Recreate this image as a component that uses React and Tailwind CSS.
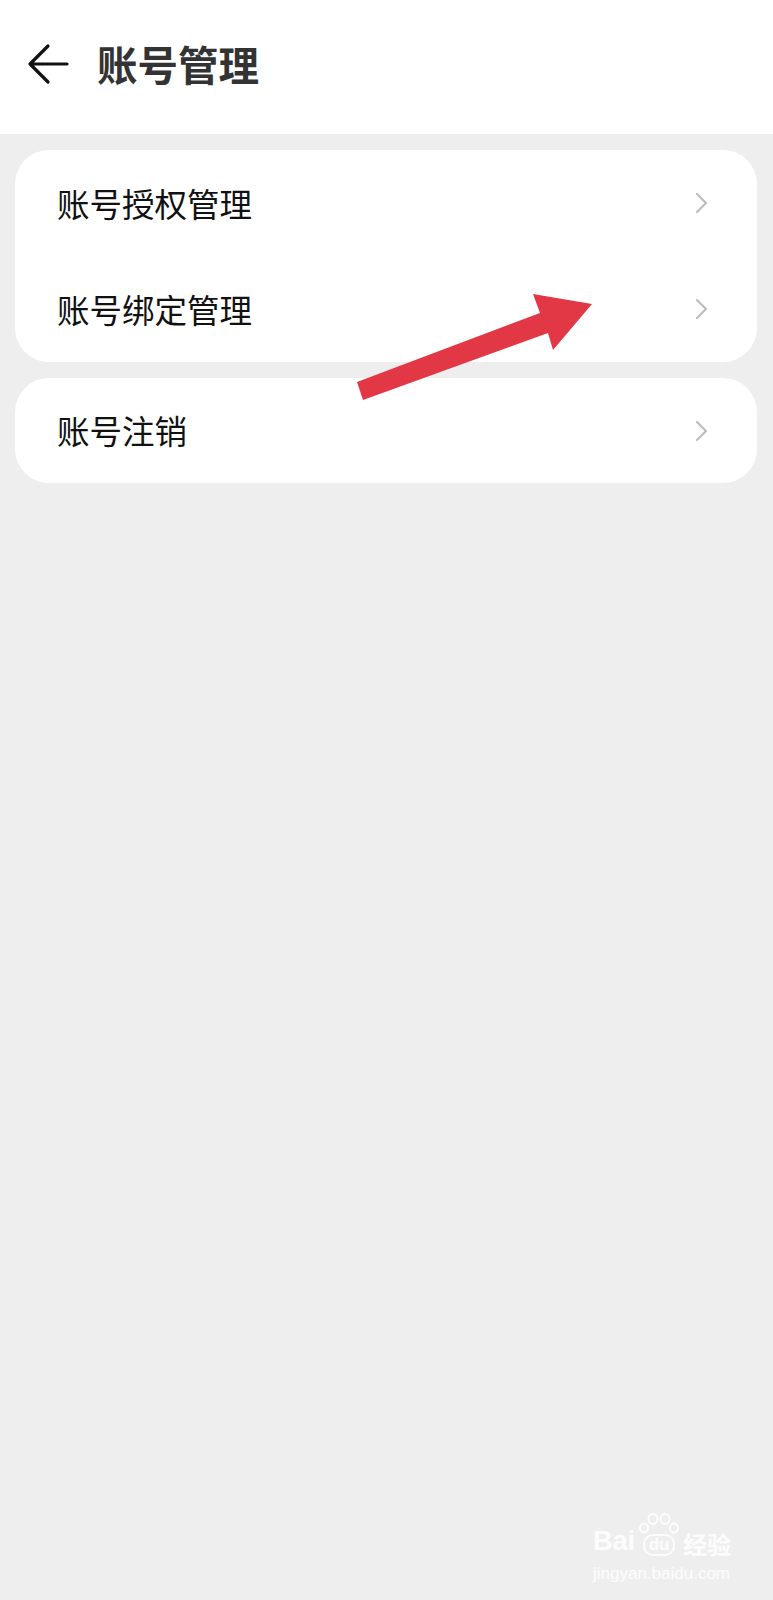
import React from 'react';

const font = { fontFamily: '"Noto Sans CJK SC", "Noto Sans", sans-serif' };
const latin = { fontFamily: '"Liberation Sans", sans-serif' };

const Chevron = () => (
  <svg width="14" height="22" viewBox="0 0 14 22" fill="none">
    <path d="M2 2l9 9-9 9" stroke="#bdbdbd" strokeWidth="2.2" strokeLinecap="round" strokeLinejoin="round" />
  </svg>
);

const Row = ({ label }) => (
  <div className="h-[106px] flex items-center justify-between pl-[42px] pr-[48px]">
    <span className="text-[32.5px] text-[#111111] leading-none">{label}</span>
    <Chevron />
  </div>
);

export default function App() {
  return (
    <div className="relative min-h-[1600px] bg-[#eeeeee]" style={font}>
      {/* Header */}
      <div className="h-[134px] bg-white flex items-center pl-[27px] pb-[6px]">
        <svg width="42" height="42" viewBox="0 0 42 42" fill="none">
          <path d="M40 21H3M21 3L3 21l18 18" stroke="#111111" strokeWidth="3.2" strokeLinecap="round" strokeLinejoin="round" />
        </svg>
        <h1 className="ml-[28px] text-[40.5px] font-bold text-[#333333] leading-none">账号管理</h1>
      </div>

      {/* Cards */}
      <div className="pl-[15px] pr-[16px] pt-[16px] flex flex-col gap-[16px]">
        <div className="bg-white rounded-[34px]">
          <Row label="账号授权管理" />
          <Row label="账号绑定管理" />
        </div>
        <div className="bg-white rounded-[34px] h-[105px] flex flex-col justify-center">
          <Row label="账号注销" />
        </div>
      </div>

      {/* Red annotation arrow */}
      <svg className="absolute left-0 top-0 pointer-events-none" width="773" height="500" viewBox="0 0 773 500">
        <polygon points="357,382 540,313 533,294 592,304 553,350 548,333 363,400" fill="#e23744" />
      </svg>

      {/* Watermark */}
      <div className="absolute left-[593px] top-[1514px] flex flex-col items-start text-white/85 select-none">
        <div className="flex items-end h-[42px]">
          <span className="text-[27px] font-bold leading-none mb-[1px]" style={latin}>Bai</span>
          <div className="mx-[3px] flex flex-col items-center">
            <svg width="42" height="22" viewBox="0 0 42 22" fill="none" className="mb-[-1px]">
              <ellipse cx="15" cy="6" rx="4.5" ry="5" stroke="white" strokeOpacity="0.85" strokeWidth="2" />
              <ellipse cx="27" cy="6" rx="4.5" ry="5" stroke="white" strokeOpacity="0.85" strokeWidth="2" />
              <ellipse cx="6" cy="15" rx="4" ry="4.5" stroke="white" strokeOpacity="0.85" strokeWidth="2" />
              <ellipse cx="36" cy="15" rx="4" ry="4.5" stroke="white" strokeOpacity="0.85" strokeWidth="2" />
            </svg>
            <span className="text-[17px] font-bold leading-none border-2 border-white/85 rounded-[10px] px-[4px] pb-[1px]" style={latin}>du</span>
          </div>
          <span className="text-[24px] font-bold leading-none">经验</span>
        </div>
        <span className="mt-[9px] text-[17px] leading-none" style={latin}>jingyan.baidu.com</span>
      </div>
    </div>
  );
}
